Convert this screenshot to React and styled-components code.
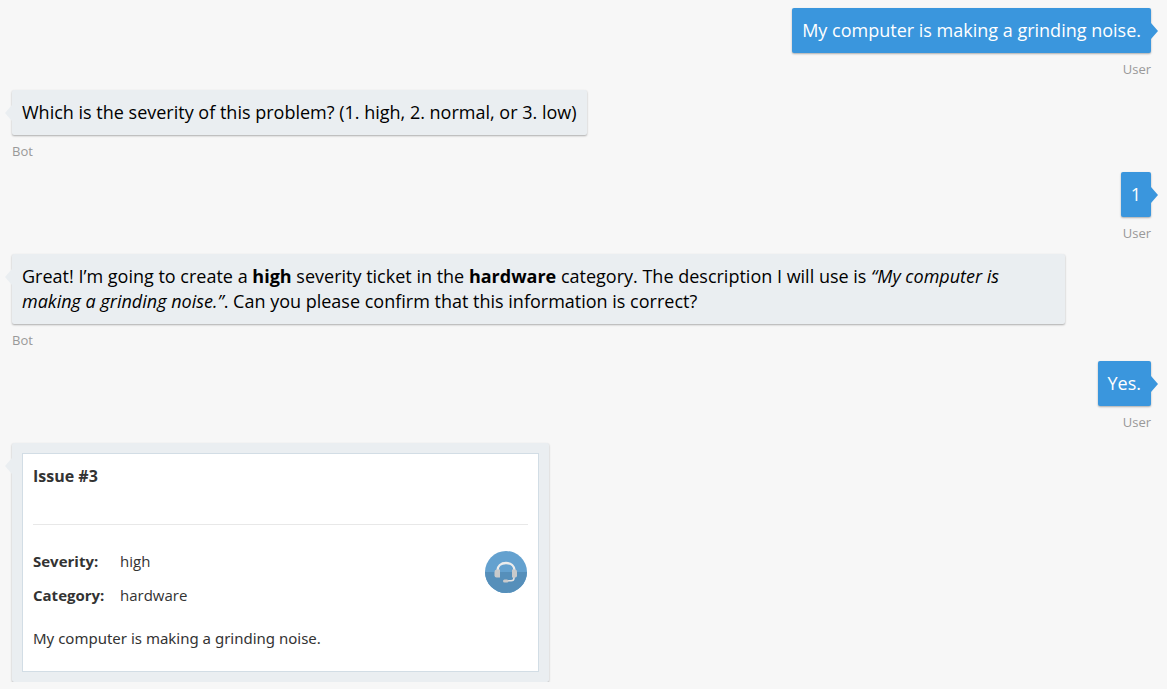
import React from "react";
import styled, { createGlobalStyle, css } from "styled-components";

const GlobalStyle = createGlobalStyle`
  * { box-sizing: border-box; }
  html, body { margin: 0; background: #f7f7f7; }
  body {
    font-family: "Open Sans", "Noto Sans", sans-serif;
    font-size: 18px;
    line-height: 25px;
    color: #000;
  }
`;

const Chat = styled.main`
  display: flex;
  flex-direction: column;
  padding: 8px 16px 0 12px;
`;

const Message = styled.article`
  display: flex;
  flex-direction: column;
  align-items: ${(p) => (p.$from === "user" ? "flex-end" : "flex-start")};
`;

const userBubble = css`
  background: #3a96dd;
  color: #fff;
  &::after {
    right: -7px;
    border-left: 7px solid #3a96dd;
  }
`;

const botBubble = css`
  background: #eaeef1;
  &::after {
    left: -7px;
    border-right: 7px solid #eaeef1;
  }
`;

const Bubble = styled.div`
  position: relative;
  max-width: calc(100% - 86px);
  padding: 10px;
  border-radius: 2px;
  box-shadow: 0 1px 2px rgba(0, 0, 0, 0.3);
  &::after {
    content: "";
    position: absolute;
    top: 15px;
    border-top: 8px solid transparent;
    border-bottom: 8px solid transparent;
  }
  ${(p) => (p.$from === "user" ? userBubble : botBubble)}
`;

const Text = styled.p`
  margin: 0;
`;

const Sender = styled.span`
  height: 37px;
  padding-top: 6px;
  font-size: 13px;
  line-height: 20px;
  color: #999;
`;

const Card = styled.section`
  width: 517px;
  max-width: 100%;
  padding: 10px;
  border: 1px solid #d2dde5;
  background: #fff;
  color: #333;
  font-size: 15px;
`;

const CardTitle = styled.h2`
  margin: 0;
  padding-bottom: 35px;
  border-bottom: 1px solid #e8e8e8;
  font-size: 16px;
  line-height: 25px;
  font-weight: 700;
`;

const CardFacts = styled.div`
  display: flex;
  justify-content: space-between;
  align-items: flex-start;
  padding: 19px 0 14px;
`;

const Facts = styled.dl`
  display: grid;
  grid-template-columns: 87px auto;
  grid-auto-rows: 34px;
  margin: 0;
  line-height: 34px;
`;

const FactName = styled.dt`
  font-weight: 700;
`;

const FactValue = styled.dd`
  margin: 0;
`;

const Badge = styled.svg`
  width: 42px;
  height: 42px;
  margin: 7px 1px 0 0;
`;

const Description = styled.p`
  margin: 0;
  padding-bottom: 10px;
  font-family: "Noto Sans", "Open Sans", sans-serif;
`;

const HeadsetIcon = () => (
  <Badge viewBox="0 0 42 42" role="img" aria-label="Support">
    <circle cx="21" cy="21" r="21" fill="#64a1cf" />
    <path d="M0 21a21 21 0 0 0 42 0z" fill="#568fba" />
    <path
      d="M12.500 19.500C12.500 15 16 12 21 12s8.500 3 8.500 7.500"
      fill="none"
      stroke="#ececec"
      strokeWidth="2.400"
    />
    <path
      d="M29 25v2q0 2.800-3 2.800h-5"
      fill="none"
      stroke="#e4e4e4"
      strokeWidth="1.500"
    />
    <path d="M11.500 18.500h3.500v8h-3.500q-2 0-2-2v-3.500q0-2.500 2-2.500z" fill="#c9cacb" />
    <path d="M30.500 18.500h-3.500v8h3.500q1.500 0 1.500-2v-3.500q0-2.500-1.500-2.500z" fill="#c9cacb" />
    <rect x="18" y="28.500" width="5.500" height="3" rx="1.500" fill="#c9cacb" />
  </Badge>
);

const Entry = ({ from, name, children }) => (
  <Message $from={from}>
    <Bubble $from={from}>{children}</Bubble>
    {name && <Sender>{name}</Sender>}
  </Message>
);

export default function App() {
  return (
    <>
      <GlobalStyle />
      <Chat>
        <Entry from="user" name="User">
          <Text>My computer is making a grinding noise.</Text>
        </Entry>
        <Entry from="bot" name="Bot">
          <Text>Which is the severity of this problem? (1. high, 2. normal, or 3. low)</Text>
        </Entry>
        <Entry from="user" name="User">
          <Text>1</Text>
        </Entry>
        <Entry from="bot" name="Bot">
          <Text>
            Great! I’m going to create a <strong>high</strong> severity ticket in the{" "}
            <strong>hardware</strong> category. The description I will use is{" "}
            <em>“My computer is making a grinding noise.”</em>. Can you please confirm that this
            information is correct?
          </Text>
        </Entry>
        <Entry from="user" name="User">
          <Text>Yes.</Text>
        </Entry>
        <Entry from="bot">
          <Card>
            <CardTitle>Issue #3</CardTitle>
            <CardFacts>
              <Facts>
                <FactName>Severity:</FactName>
                <FactValue>high</FactValue>
                <FactName>Category:</FactName>
                <FactValue>hardware</FactValue>
              </Facts>
              <HeadsetIcon />
            </CardFacts>
            <Description>My computer is making a grinding noise.</Description>
          </Card>
        </Entry>
      </Chat>
    </>
  );
}
